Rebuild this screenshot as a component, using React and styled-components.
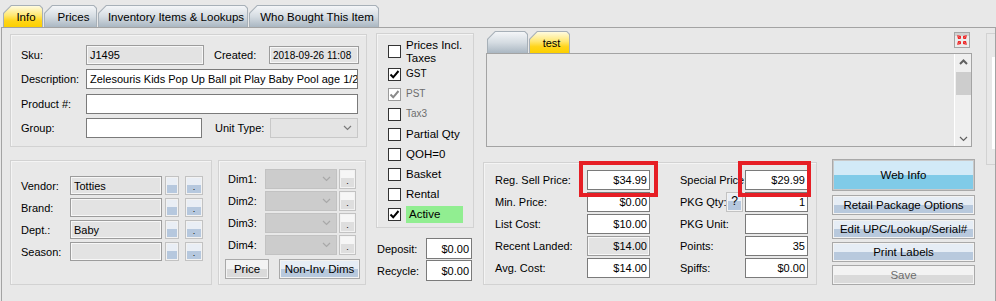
import React from 'react';
import styled, { createGlobalStyle } from 'styled-components';

const GlobalStyle = createGlobalStyle`
  html, body { margin: 0; padding: 0; background: #e8e8e8; }
  body {
    font-family: "Liberation Sans", Arial, sans-serif;
    font-size: 11px;
    color: #000;
    overflow: hidden;
  }
  * { box-sizing: border-box; }
`;

const Window = styled.div`
  width: 996px;
  height: 301px;
  overflow: hidden;
  background: #e8e8e8;
  padding-top: 5px;
`;

const TabStrip = styled.div`
  display: flex;
  gap: 1px;
  padding-left: 3px;
  height: 22px;
`;

// outer layer is the tab outline, inner face carries the gradient
const TabShell = styled.div`
  width: ${p => p.$w}px;
  height: ${p => p.$h || 22}px;
  padding: 1px 1px 0;
  background: #a7b0b8;
  clip-path: polygon(0 8px, 8px 0, calc(100% - 3px) 0, 100% 3px, 100% 100%, 0 100%);
`;

const TabFace = styled.div`
  height: 100%;
  display: flex;
  align-items: center;
  justify-content: center;
  white-space: nowrap;
  padding-left: ${p => p.$pl ?? 6}px;
  font-size: ${p => p.$fs || 11}px;
  background: ${p => (p.$active
    ? 'linear-gradient(#fffbe0 0%, #ffe770 45%, #ffd51a 70%, #fcd000 100%)'
    : 'linear-gradient(#f4f6f8 0%, #d5dce2 50%, #aab7c2 100%)')};
  clip-path: polygon(0 7.5px, 7.5px 0, calc(100% - 2.5px) 0, 100% 2.5px, 100% 100%, 0 100%);
`;

const TabPage = styled.div`
  margin-left: 1px;
  width: 995px;
  height: 280px;
  border: 1px solid #a3a3a3;
  border-bottom: none;
  display: flex;
  align-items: flex-start;
  padding: 3px 0 0 8px;
  overflow: hidden;
`;

const Column = styled.div`
  display: flex;
  flex-direction: column;
  flex: none;
  width: ${p => p.$w}px;
  margin-top: ${p => p.$mt || 0}px;
  margin-left: ${p => p.$ml || 0}px;
`;

const Group = styled.div`
  position: relative;
  flex: none;
  width: ${p => p.$w}px;
  height: ${p => p.$h}px;
  margin-top: ${p => p.$mt || 0}px;
  margin-left: ${p => p.$ml || 0}px;
  border: 1px solid #d2d2d2;
  box-shadow: inset 1px 1px 0 #f4f4f4;
  padding: ${p => p.$pad || '0'};
  display: flex;
  flex-direction: column;
  gap: ${p => p.$gap || 0}px;
`;

const Row = styled.div`
  display: flex;
  align-items: ${p => p.$align || 'center'};
  height: ${p => p.$h || 20}px;
  margin-top: ${p => p.$mt || 0}px;
  margin-left: ${p => p.$ml || 0}px;
`;

const Label = styled.span`
  flex: none;
  width: ${p => (p.$w ? `${p.$w}px` : 'auto')};
  margin-left: ${p => p.$ml || 0}px;
  white-space: nowrap;
`;

const Field = styled.div`
  flex: none;
  width: ${p => p.$w}px;
  height: ${p => p.$h || 20}px;
  margin-left: ${p => p.$ml || 0}px;
  border: 1px solid ${p => (p.$ro ? '#9c9c9c' : '#7a7a7a')};
  box-shadow: ${p => (p.$ro ? 'inset 0 0 0 1px #f7f7f7' : 'none')};
  background: ${p => (p.$ro ? '#e3e3e3' : '#fff')};
  display: flex;
  align-items: center;
  justify-content: ${p => (p.$right ? 'flex-end' : 'flex-start')};
  padding: 0 2px 0 3px;
  font-size: ${p => p.$fs || 11}px;
  white-space: nowrap;
  overflow: hidden;
`;

const Combo = styled.div`
  flex: none;
  width: ${p => p.$w}px;
  height: 20px;
  margin-left: ${p => p.$ml || 0}px;
  border: 1px solid ${p => (p.$dim ? '#c2c2c2' : '#c8c8c8')};
  background: ${p => (p.$dim ? '#cccccc' : '#e4e4e4')};
  display: flex;
  align-items: center;
  justify-content: flex-end;
  padding-right: 5px;
`;

const MiniButton = styled.div`
  flex: none;
  width: ${p => p.$w}px;
  height: ${p => p.$h || 19}px;
  margin-left: ${p => p.$ml || 0}px;
  border: 1px solid #c2c2c2;
  box-shadow: inset 0 0 0 1px #f2f2f2;
  background: ${p => (p.$grey
    ? 'linear-gradient(#f6f6f6 0 45%, #dedede 45% 100%)'
    : 'linear-gradient(#e9eef5 0 45%, #b6c8de 45% 100%)')};
  display: flex;
  align-items: ${p => (p.$mid ? 'center' : 'flex-end')};
  justify-content: center;
  font-size: ${p => (p.$mid ? 12 : 9)}px;
  line-height: 11px;
  padding-bottom: ${p => (p.$mid ? 2 : 1)}px;
`;

const PushButton = styled.div`
  flex: none;
  width: ${p => (p.$w ? `${p.$w}px` : '100%')};
  height: ${p => p.$h || 20}px;
  margin-left: ${p => p.$ml || 0}px;
  margin-top: ${p => p.$mt || 0}px;
  border: 1px solid #a9a9a9;
  box-shadow: inset 0 0 0 1px ${p => (p.$tone === 'web' ? '#c9c9c9' : '#f3f3f3')};
  background: ${p => ({
    blue: 'linear-gradient(#e6edf5 0 52%, #b8c9dd 52% 100%)',
    grey: 'linear-gradient(#f3f3f3 0 52%, #dadada 52% 100%)',
    web: 'linear-gradient(#d2eaf7 0 50%, #80cbe8 50% 100%)',
  })[p.$tone || 'blue']};
  color: ${p => (p.$disabled ? '#6d6d6d' : '#000')};
  display: flex;
  align-items: center;
  justify-content: center;
  font-size: 11.5px;
  white-space: nowrap;
`;

const CheckRow = styled.div`
  display: flex;
  align-items: center;
  height: ${p => p.$h || 20}px;
`;

const CheckBox = styled.span`
  flex: none;
  width: 13px;
  height: 13px;
  margin-right: 5px;
  border: 1px solid ${p => (p.$disabled ? '#9a9a9a' : '#333')};
  background: #fff;
  display: flex;
  align-items: center;
  justify-content: center;
`;

const CheckText = styled.span`
  font-size: ${p => p.$fs || 11.5}px;
  line-height: 12px;
  color: ${p => (p.$muted ? '#6d6d6d' : '#000')};
  background: ${p => p.$bg || 'transparent'};
  width: ${p => (p.$w ? `${p.$w}px` : 'auto')};
  height: ${p => (p.$bg ? '17px' : 'auto')};
  display: flex;
  align-items: center;
  padding-left: ${p => (p.$bg ? '3px' : '0')};
`;

const TwoLineText = styled.span`
  display: block;
  font-size: 11.5px;
  line-height: 13px;
`;

const Highlight = styled.div`
  position: absolute;
  left: ${p => p.$x}px;
  top: ${p => p.$y}px;
  width: ${p => p.$w}px;
  height: ${p => p.$h}px;
  border: 4px solid #e61e25;
  pointer-events: none;
`;

const NotesHead = styled.div`
  position: relative;
  height: 22px;
  display: flex;
  gap: 1px;
  padding-left: 4px;
`;

const CollapseButton = styled.div`
  position: absolute;
  right: 5px;
  top: 1px;
  width: 16px;
  height: 16px;
  border: 1px solid #a5a5a5;
  background: linear-gradient(#d0d0d0 0 25%, #ececec 25% 100%);
  display: flex;
  align-items: center;
  justify-content: center;
`;

const NotesBox = styled.div`
  margin-left: 3px;
  width: 486px;
  height: 94px;
  border: 1px solid #a3a3a3;
  display: flex;
  justify-content: flex-end;
`;

const ScrollBar = styled.div`
  width: 17px;
  height: 100%;
  border-left: 1px solid #fff;
  background: #efefef;
  display: flex;
  flex-direction: column;
  align-items: center;
  justify-content: space-between;
  padding: 5px 0 4px;
  position: relative;
`;

const Thumb = styled.div`
  position: absolute;
  left: 1px;
  top: 18px;
  width: 15px;
  height: 23px;
  background: #cdcdcd;
`;

const PriceGrid = styled.div`
  display: grid;
  grid-template-columns: 92px 63px 30px 46px 17px 2px 63px;
  grid-auto-rows: 20px;
  row-gap: 2px;
  align-items: center;
`;

const StubPanel = styled.div`
  flex: none;
  width: 12px;
  height: 132px;
  margin: 2px 0 0 11px;
  border: 1px solid #d2d2d2;
  padding: 23px 0 0 5px;
`;

const StubField = styled.div`
  height: 92px;
  background: #fff;
`;

const Chevron = ({ color = '#7a7a7a', up }) => (
  <svg width="9" height="6" viewBox="0 0 9 6">
    <polyline
      points={up ? '1,5 4.5,1.5 8,5' : '1,1 4.5,4.5 8,1'}
      fill="none"
      stroke={color}
      strokeWidth={up ? 2 : 1.2}
    />
  </svg>
);

const Tick = ({ color = '#000' }) => (
  <svg width="11" height="11" viewBox="0 0 11 11">
    <path d="M1.5 5.5 L4.2 8.3 L9.5 2" fill="none" stroke={color} strokeWidth="2" />
  </svg>
);

const CollapseIcon = () => (
  <svg width="12" height="12" viewBox="0 0 12 12" fill="#ee2a2a">
    <polygon points="1,1 5,5 5,2" />
    <polygon points="1,1 5,5 2,5" />
    <polygon points="11,1 7,5 7,2" />
    <polygon points="11,1 7,5 10,5" />
    <polygon points="1,11 5,7 5,10" />
    <polygon points="1,11 5,7 2,7" />
    <polygon points="11,11 7,7 7,10" />
    <polygon points="11,11 7,7 10,7" />
  </svg>
);

const mainTabs = [
  { label: 'Info', w: 40, active: true },
  { label: 'Prices', w: 53 },
  { label: 'Inventory Items & Lookups', w: 150 },
  { label: 'Who Bought This Item', w: 130 },
];

const vendorRows = [
  { label: 'Vendor:', value: 'Totties' },
  { label: 'Brand:', value: '' },
  { label: 'Dept.:', value: 'Baby' },
  { label: 'Season:', value: '' },
];

const checks = [
  { label: 'GST', checked: true, small: true },
  { label: 'PST', checked: true, small: true, disabled: true, muted: true },
  { label: 'Tax3', small: true, muted: true },
  { label: 'Partial Qty' },
  { label: 'QOH=0' },
  { label: 'Basket' },
  { label: 'Rental' },
];

const leftPrices = [
  ['Reg. Sell Price:', '$34.99'],
  ['Min. Price:', '$0.00'],
  ['List Cost:', '$10.00'],
  ['Recent Landed:', '$14.00', true],
  ['Avg. Cost:', '$14.00'],
];

const rightPrices = [
  ['Special Price:', '$29.99'],
  ['PKG Qty:', '1', true],
  ['PKG Unit:', ''],
  ['Points:', '35'],
  ['Spiffs:', '$0.00'],
];

function ItemForm() {
  return (
    <>
      <Column $w={357} $mt={3}>
        <Group $w={357} $h={113} $pad="10px 8px 0 10px">
          <Row>
            <Label $w={65}>Sku:</Label>
            <Field $w={118} $ro>J1495</Field>
            <Label $w={55} $ml={10}>Created:</Label>
            <Field $w={90} $h={18} $ro $fs={10}>2018-09-26 11:08</Field>
          </Row>
          <Row $mt={4}>
            <Label $w={65}>Description:</Label>
            <Field $w={272}>Zelesouris Kids Pop Up Ball pit Play Baby Pool age 1/2/3</Field>
          </Row>
          <Row $mt={5}>
            <Label $w={65}>Product #:</Label>
            <Field $w={272} />
          </Row>
          <Row $mt={4}>
            <Label $w={65}>Group:</Label>
            <Field $w={116} />
            <Label $w={55} $ml={13}>Unit Type:</Label>
            <Combo $w={88}><Chevron /></Combo>
          </Row>
        </Group>

        <Row $h={125} $mt={13} $align="stretch">
          <Group $w={202} $h={125} $pad="15px 0 0 10px" $gap={3}>
            {vendorRows.map(r => (
              <Row key={r.label} $h={19}>
                <Label $w={49}>{r.label}</Label>
                <Field $w={92} $h={19} $ro>{r.value}</Field>
                <MiniButton $w={14} $ml={3} />
                <MiniButton $w={18} $ml={6}>.</MiniButton>
              </Row>
            ))}
          </Group>
          <Group $w={148} $h={125} $ml={6} $pad="8px 0 0 9px" $gap={2}>
            {[1, 2, 3, 4].map(n => (
              <Row key={n}>
                <Label $w={37}>Dim{n}:</Label>
                <Combo $w={72} $dim><Chevron color="#a8a8a8" /></Combo>
                <MiniButton $w={17} $h={20} $ml={2} $grey>.</MiniButton>
              </Row>
            ))}
            <Row $mt={2} $ml={-3}>
              <PushButton $w={44} $tone="grey">Price</PushButton>
              <PushButton $w={81} $ml={10}>Non-Inv Dims</PushButton>
            </Row>
          </Group>
        </Row>
      </Column>

      <Column $w={98} $mt={2} $ml={9}>
        <Group $w={98} $h={195} $pad="5px 0 0 11px">
          <CheckRow $h={25}>
            <CheckBox />
            <TwoLineText>Prices Incl.<br />Taxes</TwoLineText>
          </CheckRow>
          {checks.map(c => (
            <CheckRow key={c.label}>
              <CheckBox $disabled={c.disabled}>
                {c.checked && <Tick color={c.disabled ? '#8a8a8a' : '#000'} />}
              </CheckBox>
              <CheckText $fs={c.small ? 10 : undefined} $muted={c.muted}>{c.label}</CheckText>
            </CheckRow>
          ))}
          <CheckRow>
            <CheckBox><Tick /></CheckBox>
            <CheckText $bg="#91ee91" $w={57}>Active</CheckText>
          </CheckRow>
        </Group>
        <Row $h={21} $mt={10} $ml={1}>
          <Label $w={49}>Deposit:</Label>
          <Field $w={46} $h={21} $right>$0.00</Field>
        </Row>
        <Row $h={21} $mt={1} $ml={1}>
          <Label $w={49}>Recycle:</Label>
          <Field $w={46} $h={21} $right>$0.00</Field>
        </Row>
      </Column>

      <Column $w={492} $ml={9}>
        <NotesHead>
          <TabShell $w={41}><TabFace $pl={0} /></TabShell>
          <TabShell $w={41}><TabFace $active $pl={4}>test</TabFace></TabShell>
          <CollapseButton><CollapseIcon /></CollapseButton>
        </NotesHead>
        <NotesBox>
          <ScrollBar>
            <Chevron up color="#606060" />
            <Thumb />
            <Chevron color="#606060" />
          </ScrollBar>
        </NotesBox>

        <Row $h={126} $mt={12} $align="flex-start">
          <Group $w={334} $h={123} $mt={3} $pad="7px 0 0 11px">
            <PriceGrid>
              {leftPrices.map((l, i) => {
                const r = rightPrices[i];
                return (
                  <React.Fragment key={l[0]}>
                    <Label>{l[0]}</Label>
                    <Field $w={63} $right $ro={l[2]}>{l[1]}</Field>
                    <span />
                    <Label style={{ gridColumn: r[2] ? 'span 1' : 'span 3' }}>{r[0]}</Label>
                    {r[2] && <MiniButton $w={17} $h={20} $mid>?</MiniButton>}
                    {r[2] && <span />}
                    <Field $w={63} $right>{r[1]}</Field>
                  </React.Fragment>
                );
              })}
            </PriceGrid>
            <Highlight $x={95} $y={-2} $w={79} $h={36} />
            <Highlight $x={254} $y={-2} $w={73} $h={36} />
          </Group>
          <Column $w={143} $ml={15}>
            <PushButton $h={32} $tone="web">Web Info</PushButton>
            <PushButton $mt={4}>Retail Package Options</PushButton>
            <PushButton $mt={4}>Edit UPC/Lookup/Serial#</PushButton>
            <PushButton $mt={3}>Print Labels</PushButton>
            <PushButton $mt={3} $tone="grey" $disabled>Save</PushButton>
          </Column>
        </Row>
      </Column>

      <StubPanel><StubField /></StubPanel>
    </>
  );
}

export default function App() {
  return (
    <Window>
      <GlobalStyle />
      <TabStrip>
        {mainTabs.map(t => (
          <TabShell key={t.label} $w={t.w}>
            <TabFace $active={t.active} $fs={11.5}>{t.label}</TabFace>
          </TabShell>
        ))}
      </TabStrip>
      <TabPage>
        <ItemForm />
      </TabPage>
    </Window>
  );
}
